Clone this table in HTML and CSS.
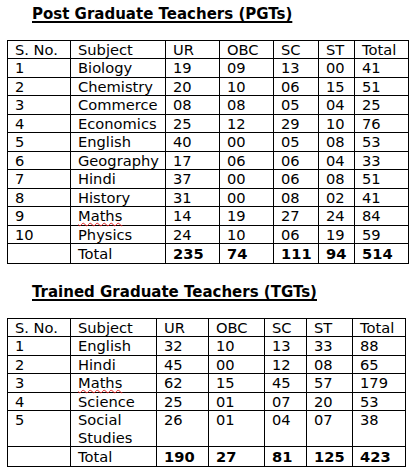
FILE: index.html
```html
<!DOCTYPE html>
<html>
<head>
<meta charset="utf-8">
<link rel="stylesheet" href="styles.css">
</head>
<body>
<section class="block">
  <h2 class="title">Post Graduate Teachers (PGTs)</h2>
  <table class="grid pgt">
    <colgroup>
      <col class="c1"><col class="c2"><col class="c3"><col class="c4"><col class="c5"><col class="c6"><col class="c7">
    </colgroup>
    <tr><td>S. No.</td><td>Subject</td><td>UR</td><td>OBC</td><td>SC</td><td>ST</td><td>Total</td></tr>
    <tr><td>1</td><td>Biology</td><td>19</td><td>09</td><td>13</td><td>00</td><td>41</td></tr>
    <tr><td>2</td><td>Chemistry</td><td>20</td><td>10</td><td>06</td><td>15</td><td>51</td></tr>
    <tr><td>3</td><td>Commerce</td><td>08</td><td>08</td><td>05</td><td>04</td><td>25</td></tr>
    <tr><td>4</td><td>Economics</td><td>25</td><td>12</td><td>29</td><td>10</td><td>76</td></tr>
    <tr><td>5</td><td>English</td><td>40</td><td>00</td><td>05</td><td>08</td><td>53</td></tr>
    <tr><td>6</td><td>Geography</td><td>17</td><td>06</td><td>06</td><td>04</td><td>33</td></tr>
    <tr><td>7</td><td>Hindi</td><td>37</td><td>00</td><td>06</td><td>08</td><td>51</td></tr>
    <tr><td>8</td><td>History</td><td>31</td><td>00</td><td>08</td><td>02</td><td>41</td></tr>
    <tr><td>9</td><td><span class="squiggle">Maths</span></td><td>14</td><td>19</td><td>27</td><td>24</td><td>84</td></tr>
    <tr><td>10</td><td>Physics</td><td>24</td><td>10</td><td>06</td><td>19</td><td>59</td></tr>
    <tr class="total"><td></td><td>Total</td><td class="b">235</td><td class="b">74</td><td class="b">111</td><td class="b">94</td><td class="b">514</td></tr>
  </table>
</section>
<section class="block second">
  <h2 class="title">Trained Graduate Teachers (TGTs)</h2>
  <table class="grid tgt">
    <colgroup>
      <col class="c1"><col class="c2"><col class="c3"><col class="c4"><col class="c5"><col class="c6"><col class="c7">
    </colgroup>
    <tr><td>S. No.</td><td>Subject</td><td>UR</td><td>OBC</td><td>SC</td><td>ST</td><td>Total</td></tr>
    <tr><td>1</td><td>English</td><td>32</td><td>10</td><td>13</td><td>33</td><td>88</td></tr>
    <tr><td>2</td><td>Hindi</td><td>45</td><td>00</td><td>12</td><td>08</td><td>65</td></tr>
    <tr><td>3</td><td><span class="squiggle">Maths</span></td><td>62</td><td>15</td><td>45</td><td>57</td><td>179</td></tr>
    <tr><td>4</td><td>Science</td><td>25</td><td>01</td><td>07</td><td>20</td><td>53</td></tr>
    <tr><td>5</td><td>Social Studies</td><td>26</td><td>01</td><td>04</td><td>07</td><td>38</td></tr>
    <tr class="total"><td></td><td>Total</td><td class="b">190</td><td class="b">27</td><td class="b">81</td><td class="b">125</td><td class="b">423</td></tr>
  </table>
</section>
</body>
</html>
```
FILE: styles.css
```css
html, body {
  margin: 0;
  padding: 0;
  background: #ffffff;
}
body {
  font-family: "DejaVu Sans", Verdana, sans-serif;
  font-size: 14.67px;
  color: #000000;
}
.block {
  padding-left: 7px;
}
.title {
  margin: 5px 0 17px 25px;
  font-size: 15px;
  line-height: 18px;
  font-weight: bold;
  text-decoration: underline;
  text-decoration-thickness: 2px;
  text-underline-offset: 2px;
}
.second .title {
  margin-top: 19px;
}
.grid {
  border-collapse: collapse;
  table-layout: fixed;
}
.grid td {
  border: 1px solid #000000;
  padding: 0 2px 0 7px;
  line-height: 17.45px;
  vertical-align: top;
}
.grid .total td {
  line-height: 19px;
}
.grid td.b {
  font-weight: bold;
}
.pgt { width: 402px; }
.pgt .c1 { width: 63px; }
.pgt .c2 { width: 95px; }
.pgt .c3 { width: 54px; }
.pgt .c4 { width: 54px; }
.pgt .c5 { width: 45px; }
.pgt .c6 { width: 36px; }
.pgt .c7 { width: 54px; }
.tgt { width: 399px; }
.tgt .c1 { width: 63px; }
.tgt .c2 { width: 86px; }
.tgt .c3 { width: 52px; }
.tgt .c4 { width: 56px; }
.tgt .c5 { width: 42px; }
.tgt .c6 { width: 46px; }
.tgt .c7 { width: 53px; }
.squiggle {
  text-decoration-line: underline;
  text-decoration-style: wavy;
  text-decoration-color: #e02020;
  text-decoration-thickness: 1px;
  text-underline-offset: 1px;
}
```
